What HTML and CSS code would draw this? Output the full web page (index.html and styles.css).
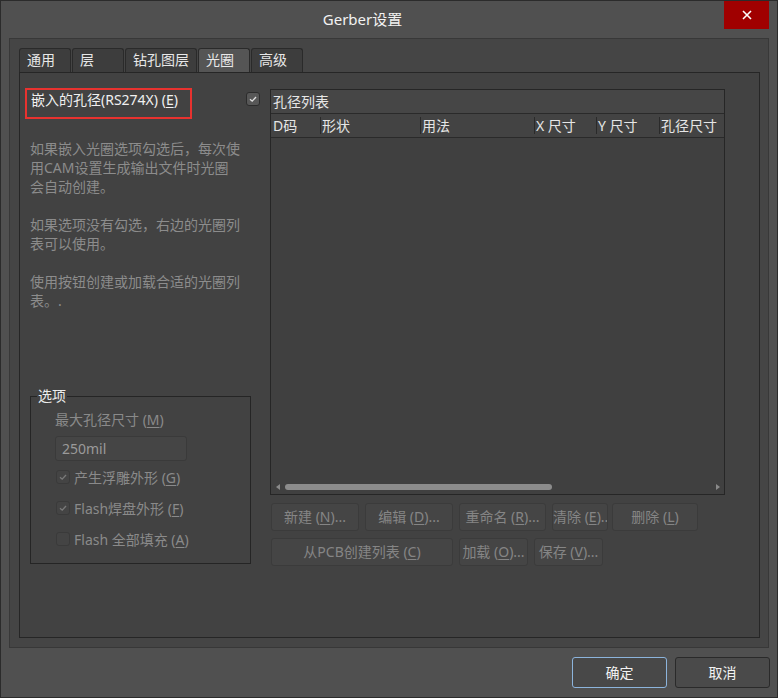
FILE: index.html
```html
<!DOCTYPE html>
<html lang="zh">
<head>
  <meta charset="UTF-8">
  <title>Gerber设置</title>
  <link rel="stylesheet" href="styles.css">
</head>
<body>
  <!-- Dialog Window -->
  <div class="window">
    <div class="titlebar">
      <div class="title">Gerber设置</div>
      <div class="close">
        <svg width="10" height="10" viewBox="0 0 10 10"><path d="M1 1 L9 9 M9 1 L1 9" stroke="#fff" stroke-width="1.6"/></svg>
      </div>
    </div>

    <div class="main">
      <!-- Tabs -->
      <div class="tabs">
        <div class="tab">通用</div>
        <div class="tab">层</div>
        <div class="tab wide">钻孔图层</div>
        <div class="tab active">光圈</div>
        <div class="tab">高级</div>
      </div>

      <div class="pane">
        <!-- Left Column -->
        <div class="left">
          <div class="embed-row">
            <div class="embed">嵌入的孔径(RS274X) (<u>E</u>)</div>
            <span class="check on">
              <svg width="12" height="12" viewBox="0 0 12 12"><path d="M3 6.2 L5.2 8.2 L9 4" fill="none" stroke="#e0e0e0" stroke-width="1.3"/></svg>
            </span>
          </div>

          <p class="desc">如果嵌入光圈选项勾选后，每次使<br>用CAM设置生成输出文件时光圈<br>会自动创建。</p>
          <p class="desc">如果选项没有勾选，右边的光圈列<br>表可以使用。</p>
          <p class="desc">使用按钮创建或加载合适的光圈列<br>表。.</p>

          <fieldset class="options">
            <legend>选项</legend>
            <div class="options-body">
              <div class="field-label">最大孔径尺寸 (<u>M</u>)</div>
              <div class="input">250mil</div>
              <div class="opt">
                <span class="check dim">
                  <svg width="12" height="12" viewBox="0 0 12 12"><path d="M3 6.2 L5.2 8.2 L9 4" fill="none" stroke="#7a7a7a" stroke-width="1.3"/></svg>
                </span>
                <span>产生浮雕外形 (<u>G</u>)</span>
              </div>
              <div class="opt">
                <span class="check dim">
                  <svg width="12" height="12" viewBox="0 0 12 12"><path d="M3 6.2 L5.2 8.2 L9 4" fill="none" stroke="#7a7a7a" stroke-width="1.3"/></svg>
                </span>
                <span>Flash焊盘外形 (<u>F</u>)</span>
              </div>
              <div class="opt">
                <span class="check dim"></span>
                <span>Flash 全部填充 (<u>A</u>)</span>
              </div>
            </div>
          </fieldset>
        </div>

        <!-- Right Column -->
        <div class="right">
          <div class="list">
            <div class="list-title">孔径列表</div>
            <div class="list-head">
              <div class="col c1">D码</div>
              <div class="col c2">形状</div>
              <div class="col c3">用法</div>
              <div class="col c4">X 尺寸</div>
              <div class="col c5">Y 尺寸</div>
              <div class="col c6">孔径尺寸</div>
            </div>
            <div class="list-body"></div>
            <div class="hscroll">
              <span class="arrow-left"></span>
              <span class="thumb"></span>
              <span class="arrow-right"></span>
            </div>
          </div>

          <div class="btn-row">
            <div class="btn w88">新建 (<u>N</u>)...</div>
            <div class="btn w88">编辑 (<u>D</u>)...</div>
            <div class="btn w87">重命名 (<u>R</u>)...</div>
            <div class="btn w56 clip">清除 (<u>E</u>)..</div>
            <div class="btn w86 tight">删除 (<u>L</u>)</div>
          </div>
          <div class="btn-row">
            <div class="btn w182">从PCB创建列表 (<u>C</u>)</div>
            <div class="btn w69">加载 (<u>O</u>)...</div>
            <div class="btn w69">保存 (<u>V</u>)...</div>
          </div>
        </div>
      </div>
    </div>

    <!-- Footer Buttons -->
    <div class="footer">
      <div class="fbtn ok">确定</div>
      <div class="fbtn">取消</div>
    </div>
  </div>
</body>
</html>
```

FILE: styles.css
```css
/* General */
* {
  box-sizing: border-box;
}

body {
  margin: 0;
  background: #505050;
  font-family: "Noto Sans", "Noto Sans CJK SC", sans-serif;
  font-size: 14px;
  color: #e6e6e6;
}

u {
  text-underline-offset: 2px;
}

/* Window */
.window {
  width: 778px;
  height: 698px;
  border: 1px solid #2b2b2b;
  background: #505050;
  display: flex;
  flex-direction: column;
}

.titlebar {
  height: 37px;
  display: flex;
  flex-shrink: 0;
}

.title {
  flex: 1;
  text-align: center;
  line-height: 37px;
  font-size: 15px;
  color: #f2f2f2;
}

.close {
  width: 45px;
  height: 28px;
  margin-right: 8px;
  background: #a00000;
  display: flex;
  align-items: center;
  justify-content: center;
}

/* Main Area */
.main {
  height: 610px;
  flex-shrink: 0;
  margin: 0 8px;
  border: 1px solid #383838;
  background: #454545;
  padding: 9px 8px 9px 9px;
  display: flex;
  flex-direction: column;
}

.tabs {
  display: flex;
  gap: 1px;
  height: 24px;
}

.tab {
  width: 52px;
  height: 24px;
  padding-left: 7px;
  line-height: 22px;
  background: #3d3d3d;
  border: 1px solid #2a2a2a;
  border-bottom: none;
  border-radius: 3px 3px 0 0;
  color: #e8e8e8;
}

.tab.wide {
  width: 72px;
}

.tab.active {
  background: #555555;
}

.pane {
  flex: 1;
  border: 1px solid #262626;
  background: #424242;
  display: flex;
  gap: 10px;
  padding: 15px 0 0 5px;
}

/* Left Column */
.left {
  width: 235px;
  display: flex;
  flex-direction: column;
}

.embed-row {
  display: flex;
  justify-content: space-between;
  align-items: flex-start;
}

.embed {
  width: 167px;
  height: 31px;
  border: 2px solid #e8322f;
  padding-left: 4px;
  line-height: 20px;
  color: #f0f0f0;
  white-space: nowrap;
}

.check {
  width: 14px;
  height: 14px;
  border-radius: 3px;
  display: flex;
  align-items: center;
  justify-content: center;
  flex-shrink: 0;
}

.check.on {
  margin-top: 4px;
  background: #575757;
  border: 1px solid #2c2c2c;
}

.check.dim {
  background: #444444;
  border: 1px solid #3a3a3a;
}

.desc {
  margin: 19px 0 0;
  padding-left: 5px;
  line-height: 19px;
  color: #8c8c8c;
  white-space: nowrap;
}

.embed-row + .desc {
  margin-top: 20px;
}

/* Options Group */
.options {
  margin: 76px 0 0 5px;
  width: 221px;
  border: 1px solid #252525;
  padding: 0 0 9px 6px;
  min-width: 0;
}

.options legend {
  padding: 0 1px;
  line-height: 20px;
  color: #ededed;
}

.options-body {
  padding-left: 18px;
  color: #8a8a8a;
}

.field-label {
  margin-top: 4px;
  line-height: 20px;
}

.input {
  width: 132px;
  height: 25px;
  margin-top: 6px;
  border: 1px solid #3a3a3a;
  border-radius: 3px;
  background: #454545;
  padding-left: 6px;
  line-height: 23px;
  color: #9a9a9a;
}

.opt {
  height: 31px;
  display: flex;
  align-items: center;
  gap: 4px;
  padding-left: 1px;
  white-space: nowrap;
}

/* Right Column */
.right {
  width: 455px;
  margin-top: 1px;
}

.list {
  height: 406px;
  border: 1px solid #262626;
  background: #404040;
  display: flex;
  flex-direction: column;
}

.list-title {
  height: 24px;
  border-bottom: 1px solid #2a2a2a;
  background: #464646;
  padding-left: 2px;
  line-height: 23px;
  color: #e6e6e6;
}

.list-head {
  height: 24px;
  border-bottom: 1px solid #2a2a2a;
  background: #434343;
  display: flex;
  align-items: center;
}

.col {
  height: 17px;
  line-height: 17px;
  padding-left: 1px;
  white-space: nowrap;
  overflow: hidden;
  color: #e6e6e6;
}

.col + .col {
  border-left: 1px solid #2a2a2a;
}

.c1 { width: 49px; padding-left: 2px; }
.c2 { width: 100px; }
.c3 { width: 114px; }
.c4 { width: 62px; }
.c5 { width: 63px; }
.c6 { flex: 1; }

.list-body {
  flex: 1;
}

.hscroll {
  height: 12px;
  margin-bottom: 1px;
  display: flex;
  align-items: center;
  padding: 0 4px 0 5px;
}

.arrow-left {
  width: 0;
  height: 0;
  border-top: 3.5px solid transparent;
  border-bottom: 3.5px solid transparent;
  border-right: 4px solid #8a8a8a;
}

.arrow-right {
  width: 0;
  height: 0;
  margin-left: auto;
  border-top: 3.5px solid transparent;
  border-bottom: 3.5px solid transparent;
  border-left: 4px solid #8a8a8a;
}

.thumb {
  width: 267px;
  height: 6px;
  margin-left: 5px;
  border-radius: 3px;
  background: #8c8c8c;
}

/* Buttons */
.btn-row {
  display: flex;
  gap: 6px;
  padding-left: 1px;
  margin-top: 8px;
}

.btn-row + .btn-row {
  margin-top: 7px;
}

.btn {
  height: 28px;
  border: 1px solid #3b3b3b;
  border-radius: 3px;
  background: #454545;
  color: #858585;
  line-height: 26px;
  text-align: center;
  white-space: nowrap;
  overflow: hidden;
}

.btn.clip {
  text-align: left;
}

.btn.tight {
  margin-left: -2px;
}

.w88 { width: 88px; }
.w87 { width: 87px; }
.w86 { width: 86px; }
.w56 { width: 56px; }
.w182 { width: 182px; }
.w69 { width: 69px; }

/* Footer */
.footer {
  flex: 1;
  display: flex;
  justify-content: flex-end;
  align-items: flex-start;
  gap: 8px;
  padding: 9px 7px 0 0;
}

.fbtn {
  width: 95px;
  height: 31px;
  border: 1px solid #2a2a2a;
  border-radius: 3px;
  background: #4a4a4a;
  color: #f2f2f2;
  line-height: 29px;
  text-align: center;
}

.fbtn.ok {
  border-color: #8cb4dc;
  background: #484848;
}
```
